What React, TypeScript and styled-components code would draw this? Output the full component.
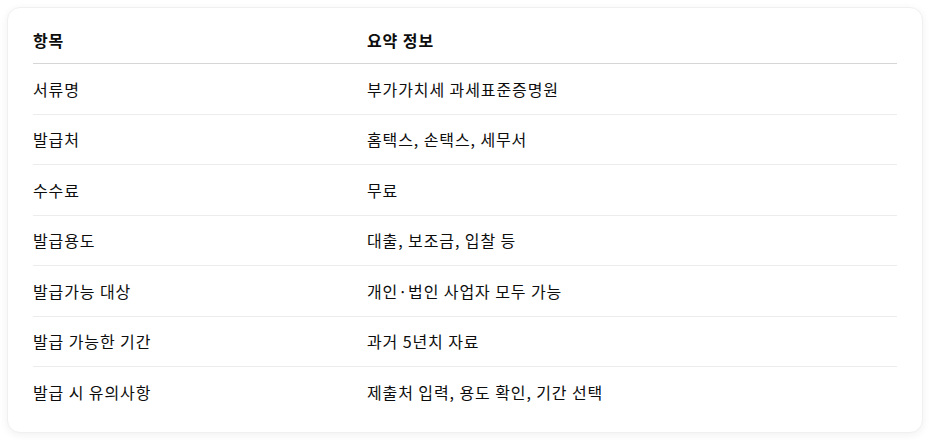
import styled, { createGlobalStyle } from 'styled-components';

const ROWS = [
  { label: '서류명', value: '부가가치세 과세표준증명원' },
  { label: '발급처', value: '홈택스, 손택스, 세무서' },
  { label: '수수료', value: '무료' },
  { label: '발급용도', value: '대출, 보조금, 입찰 등' },
  { label: '발급가능 대상', value: '개인·법인 사업자 모두 가능' },
  { label: '발급 가능한 기간', value: '과거 5년치 자료' },
  { label: '발급 시 유의사항', value: '제출처 입력, 용도 확인, 기간 선택' },
];

const GlobalStyle = createGlobalStyle`
  body {
    margin: 0;
    background: #ffffff;
    font-family: 'Noto Sans CJK KR', 'Noto Sans', sans-serif;
    color: #0d0d0d;
  }
`;

export default function App() {
  return (
    <>
      <GlobalStyle />
      <Page>
        <Card>
          <Table>
            <thead>
              <tr>
                <Th $first>항목</Th>
                <Th>요약 정보</Th>
              </tr>
            </thead>
            <tbody>
              {ROWS.map((row) => (
                <Row key={row.label}>
                  <Td>{row.label}</Td>
                  <Td>{row.value}</Td>
                </Row>
              ))}
            </tbody>
          </Table>
        </Card>
      </Page>
    </>
  );
}

const Page = styled.div`
  padding: 7px;
`;

const Card = styled.div`
  width: 916px;
  box-sizing: border-box;
  background: #fff;
  border: 1px solid #f0f0f0;
  border-radius: 13px;
  box-shadow: 0 2px 8px rgba(0, 0, 0, 0.06);
  padding: 9px 25px 15px;
`;

const Table = styled.table`
  width: 100%;
  border-collapse: collapse;
  font-size: 16px;
  letter-spacing: 0.9px;
`;

const Th = styled.th<{ $first?: boolean }>`
  text-align: left;
  font-weight: 700;
  height: 46px;
  padding: 0;
  width: ${({ $first }) => ($first ? '334px' : 'auto')};
  border-bottom: 1px solid #d6d6d6;
  vertical-align: middle;
`;

const Row = styled.tr`
  & + & td {
    border-top: 1px solid #ececec;
  }
`;

const Td = styled.td`
  height: 49.5px;
  padding: 0;
  vertical-align: middle;
  font-weight: 400;
`;
